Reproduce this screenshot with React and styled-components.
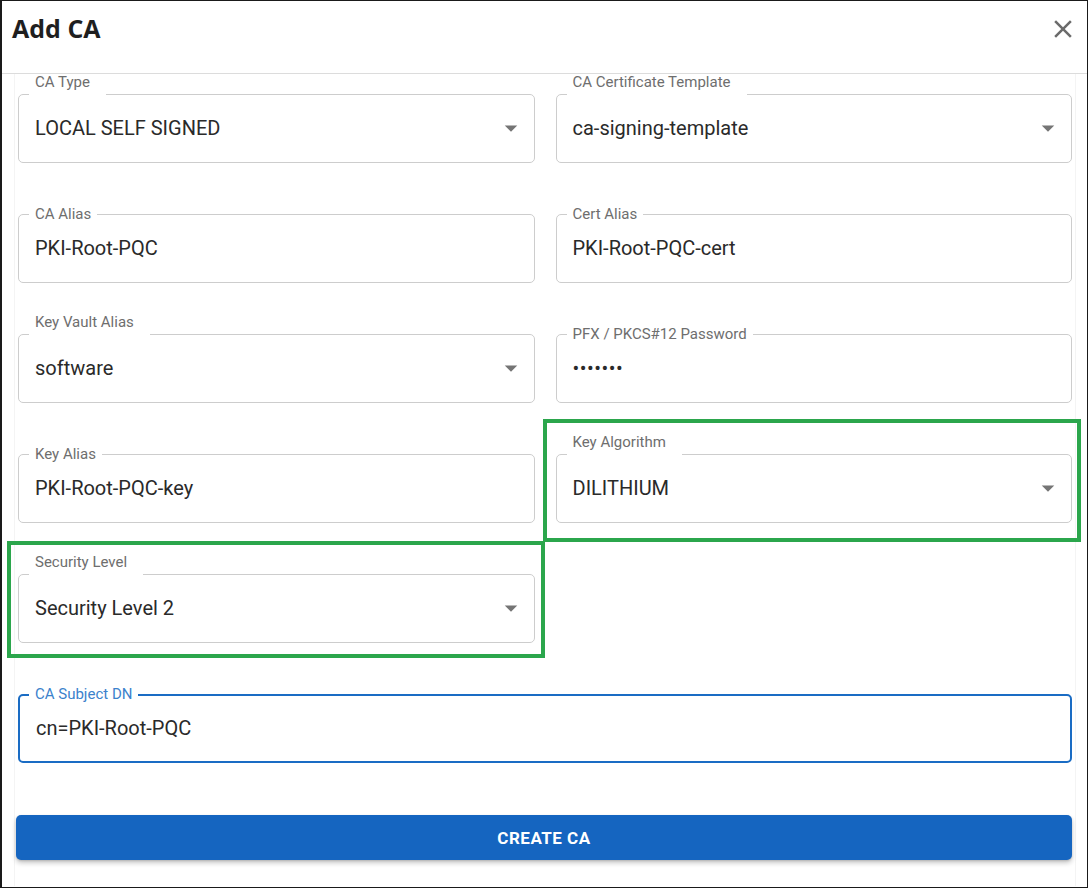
import React from "react";
import styled, { createGlobalStyle, css } from "styled-components";

const GlobalStyle = createGlobalStyle`
	html, body {
		margin: 0;
		padding: 0;
		background: #fff;
	}
	* {
		box-sizing: border-box;
	}
`;

const Frame = styled.div`
	position: relative;
	width: 1088px;
	height: 888px;
	border: 1px solid #1a1a1a;
	border-left-width: 2px;
	background: #fff;
	font-family: Roboto, "Liberation Sans", Arial, sans-serif;
	overflow: hidden;
`;

const Header = styled.div`
	display: flex;
	align-items: flex-start;
	justify-content: space-between;
	height: 73px;
	padding: 10px 9px 0 10px;
	border-bottom: 1px solid #dcdcdc;
`;

const Title = styled.h2`
	margin: 0;
	font-family: "Open Sans", "Liberation Sans", sans-serif;
	font-size: 25px;
	font-weight: 700;
	line-height: 34px;
	color: #1f1f1f;
`;

const CloseButton = styled.button`
	display: flex;
	align-items: center;
	justify-content: center;
	width: 30px;
	height: 30px;
	margin-top: 3px;
	padding: 0;
	border: none;
	background: transparent;
	color: #6b6b6b;
	cursor: pointer;
`;

const Content = styled.div`
	margin: 0 11px 0 12px;
	padding: 20px 3px 0 3px;
	height: 812px;
	border-left: 1px solid #f4f4f4;
	border-right: 1px solid #f4f4f4;
`;

const Grid = styled.div`
	display: grid;
	grid-template-columns: 1fr 1fr;
	column-gap: 21px;
	row-gap: 51px;
`;

const Cell = styled.div`
	position: relative;
	grid-column: ${(p) => (p.$wide ? "1 / span 2" : "auto")};

	${(p) =>
		p.$mark &&
		css`
			&::after {
				content: "";
				position: absolute;
				top: ${p.$mark[0]}px;
				right: ${p.$mark[1]}px;
				bottom: ${p.$mark[2]}px;
				left: ${p.$mark[3]}px;
				border: 4px solid #2ba64c;
				pointer-events: none;
			}
		`}
`;

const Box = styled.div`
	position: relative;
	display: flex;
	align-items: center;
	height: 69px;
	padding: 0 16px 2px 16px;
	border: ${(p) => (p.$focused ? "2px solid #1a6cc4" : "1px solid #cdcdcd")};
	border-radius: 5px;
	background: #fff;
`;

const Label = styled.label`
	position: absolute;
	left: ${(p) => (p.$focused ? 9 : 10)}px;
	top: ${(p) => (p.$raised ? -23 : p.$focused ? -12 : -11)}px;
	padding: ${(p) => (p.$raised ? "0 16px 0 6px" : "0 6px")};
	font-size: 15px;
	line-height: 20px;
	color: ${(p) => (p.$focused ? "#3b82cc" : "#6e6e6e")};
	background: ${(p) => (p.$raised ? "transparent" : "#fff")};
	white-space: nowrap;

	${(p) =>
		p.$raised &&
		css`
			&::before {
				content: "";
				position: absolute;
				left: 0;
				right: 0;
				top: 20px;
				height: 4px;
				background: #fff;
			}
		`}
`;

const Value = styled.span`
	flex: 1;
	font-size: 20px;
	line-height: 24px;
	color: #2a2a2a;
	letter-spacing: ${(p) => (p.$secret ? "0.5px" : "0")};
`;

const Arrow = styled.span`
	display: flex;
	margin-right: -8px;
	color: #757575;
`;

const SubmitButton = styled.button`
	display: block;
	width: calc(100% + 2px);
	height: 45px;
	margin: 52px 0 0 -2px;
	border: none;
	border-radius: 5px;
	background: #1565c0;
	box-shadow: 0 3px 5px rgba(0, 0, 0, 0.22), 0 1px 2px rgba(0, 0, 0, 0.12);
	color: #fff;
	font-family: Roboto, "Liberation Sans", sans-serif;
	font-size: 17px;
	font-weight: 700;
	letter-spacing: 0.5px;
	cursor: pointer;
`;

const DropIcon = () => (
	<svg width="30" height="30" viewBox="0 0 24 24" fill="currentColor">
		<path d="M7 10l5 5 5-5z" />
	</svg>
);

const CloseIcon = () => (
	<svg width="30" height="30" viewBox="0 0 24 24" fill="currentColor">
		<path d="M19 6.41 17.59 5 12 10.59 6.41 5 5 6.41 10.59 12 5 17.59 6.41 19 12 13.41 17.59 19 19 17.59 13.41 12z" />
	</svg>
);

const fields = [
	{ label: "CA Type", value: "LOCAL SELF SIGNED", select: true },
	{ label: "CA Certificate Template", value: "ca-signing-template", select: true },
	{ label: "CA Alias", value: "PKI-Root-PQC" },
	{ label: "Cert Alias", value: "PKI-Root-PQC-cert" },
	{ label: "Key Vault Alias", value: "software", select: true },
	{ label: "PFX / PKCS#12 Password", value: "•••••••", secret: true },
	{ label: "Key Alias", value: "PKI-Root-PQC-key" },
	{ label: "Key Algorithm", value: "DILITHIUM", select: true, mark: [-35, -9, -19, -13] },
	{ label: "Security Level", value: "Security Level 2", select: true, mark: [-33, -10, -15, -11] },
	{ empty: true },
	{ label: "CA Subject DN", value: "cn=PKI-Root-PQC", wide: true, focused: true },
];

const Field = ({ field }) => (
	<Cell $wide={field.wide} $mark={field.mark}>
		<Box $focused={field.focused}>
			<Label $raised={field.select} $focused={field.focused}>
				{field.label}
			</Label>
			<Value $secret={field.secret}>{field.value}</Value>
			{field.select && (
				<Arrow>
					<DropIcon />
				</Arrow>
			)}
		</Box>
	</Cell>
);

const App = () => {
	return (
		<>
			<GlobalStyle />
			<Frame>
				<Header>
					<Title>Add CA</Title>
					<CloseButton aria-label="close">
						<CloseIcon />
					</CloseButton>
				</Header>
				<Content>
					<Grid>
						{fields.map((field, i) =>
							field.empty ? <Cell key={i} /> : <Field key={i} field={field} />,
						)}
					</Grid>
					<SubmitButton type="button">CREATE CA</SubmitButton>
				</Content>
			</Frame>
		</>
	);
};

export default App;
